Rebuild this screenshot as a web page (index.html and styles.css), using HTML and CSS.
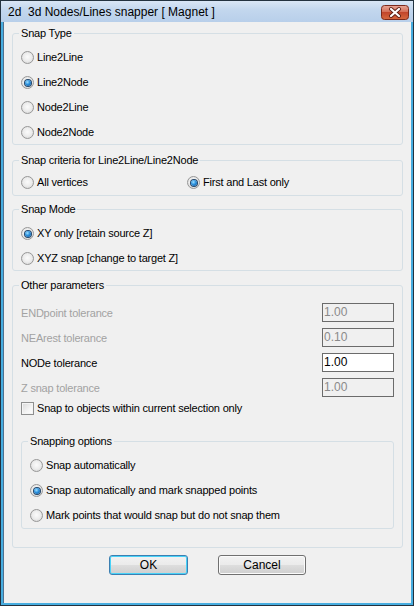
FILE: index.html
```html
<!DOCTYPE html>
<html>
<head>
<meta charset="utf-8">
<link rel="stylesheet" href="styles.css">
</head>
<body>
<div class="window">
  <div class="titlebar">
    <span class="title">2d  3d Nodes/Lines snapper [ Magnet ]</span>
    <span class="close">
      <svg width="28" height="15" viewBox="0 0 28 15">
        <defs>
          <linearGradient id="cg" x1="0" y1="0" x2="0" y2="1">
            <stop offset="0" stop-color="#e9a797"/>
            <stop offset="0.45" stop-color="#d46f58"/>
            <stop offset="0.5" stop-color="#c2462c"/>
            <stop offset="1" stop-color="#d7693f"/>
          </linearGradient>
        </defs>
        <rect x="0.5" y="0.5" width="27" height="14" rx="3" fill="url(#cg)" stroke="#7c2a1c"/>
        <path d="M10 4 L18 11 M18 4 L10 11" stroke="#5b1e14" stroke-width="4" stroke-linecap="round"/>
        <path d="M10 4 L18 11 M18 4 L10 11" stroke="#ffffff" stroke-width="2.2" stroke-linecap="round"/>
      </svg>
    </span>
  </div>
  <div class="frame">
    <div class="client">
      <fieldset class="group g1">
        <legend>Snap Type</legend>
        <div class="rows">
          <div class="opt"><span class="radio"></span>Line2Line</div>
          <div class="opt"><span class="radio on"></span>Line2Node</div>
          <div class="opt"><span class="radio"></span>Node2Line</div>
          <div class="opt"><span class="radio"></span>Node2Node</div>
        </div>
      </fieldset>

      <fieldset class="group g2">
        <legend>Snap criteria for Line2Line/Line2Node</legend>
        <div class="cols">
          <div class="opt"><span class="radio"></span>All vertices</div>
          <div class="opt"><span class="radio on"></span>First and Last only</div>
        </div>
      </fieldset>

      <fieldset class="group g3">
        <legend>Snap Mode</legend>
        <div class="rows">
          <div class="opt"><span class="radio on"></span>XY only [retain source Z]</div>
          <div class="opt"><span class="radio"></span>XYZ snap [change to target Z]</div>
        </div>
      </fieldset>

      <fieldset class="group g4">
        <legend>Other parameters</legend>
        <div class="params">
          <div class="param disabled"><span>ENDpoint tolerance</span><span class="field">1.00</span></div>
          <div class="param disabled"><span>NEArest tolerance</span><span class="field">0.10</span></div>
          <div class="param"><span>NODe tolerance</span><span class="field active">1.00</span></div>
          <div class="param disabled"><span>Z snap tolerance</span><span class="field">1.00</span></div>
        </div>
        <div class="opt check-row"><span class="check"></span>Snap to objects within current selection only</div>

        <fieldset class="group inner">
          <legend>Snapping options</legend>
          <div class="rows">
            <div class="opt"><span class="radio"></span>Snap automatically</div>
            <div class="opt"><span class="radio on"></span>Snap automatically and mark snapped points</div>
            <div class="opt"><span class="radio"></span>Mark points that would snap but do not snap them</div>
          </div>
        </fieldset>
      </fieldset>

      <div class="buttons">
        <button class="btn default">OK</button>
        <button class="btn cancel">Cancel</button>
      </div>
    </div>
  </div>
</div>
</body>
</html>
```
FILE: styles.css
```css
html, body {
  margin: 0;
  padding: 0;
  background: #f0f0f0;
}
body {
  font-family: "Liberation Sans", Arial, sans-serif;
  font-size: 11px;
  color: #000;
}
.window {
  width: 414px;
  height: 606px;
  box-sizing: border-box;
  border: 1px solid #23323f;
  display: flex;
  flex-direction: column;
  background: #47ade0;
}
.titlebar {
  height: 21px;
  flex: none;
  display: flex;
  align-items: center;
  justify-content: space-between;
  background: linear-gradient(#d9e6f5, #c3d7ee 40%, #b8cfea);
  padding: 0 4px 0 7px;
}
.title {
  white-space: pre;
  font-size: 12px;
  color: #000;
  padding-top: 1px;
}
.close {
  display: flex;
  margin-top: 1px;
}
.frame {
  flex: 1;
  display: flex;
  padding: 0 2px 2px 2px;
}
.client {
  flex: 1;
  background: #f0f0f0;
  border-left: 1px solid #4f7190;
  padding: 0 8px;
  display: flex;
  flex-direction: column;
  letter-spacing: -0.2px;
}
.group {
  margin: 0;
  border: 1px solid #d5dfe5;
  border-radius: 3px;
  padding: 0 8px;
  min-width: 0;
}
.group legend {
  padding: 0 2px;
  margin-left: -2px;
  line-height: 13px;
  height: 13px;
}
.g1 { margin-top: 5px; padding-top: 10px; padding-bottom: 4px; }
.g2 { margin-top: 9px; padding-top: 8px; padding-bottom: 5px; }
.g3 { margin-top: 7px; padding-top: 10px; padding-bottom: 4px; }
.g4 { margin-top: 8px; padding-top: 11px; padding-bottom: 18px; }
.inner { margin-top: 20px; padding-top: 10px; padding-bottom: 5px; }

.rows {
  display: flex;
  flex-direction: column;
  gap: 10px;
}
.cols {
  display: grid;
  grid-template-columns: 166px 1fr;
}
.opt {
  display: flex;
  align-items: center;
  height: 15px;
  line-height: 15px;
  white-space: nowrap;
}
.radio {
  width: 13px;
  height: 13px;
  box-sizing: border-box;
  border-radius: 50%;
  border: 1px solid #979797;
  background: radial-gradient(circle at 50% 45%, #fbfbfb 0%, #ececec 50%, #cfcfcf 100%);
  margin-right: 3px;
  flex: none;
  display: inline-flex;
  align-items: center;
  justify-content: center;
}
.radio.on::after {
  content: "";
  width: 6px;
  height: 6px;
  border-radius: 50%;
  background: radial-gradient(circle at 40% 35%, #9fe0ff 0%, #2a8fdc 45%, #0a4f92 100%);
  box-shadow: 0 0 0 1px #23466a;
}
.check {
  width: 13px;
  height: 13px;
  box-sizing: border-box;
  border: 1px solid #8e8f8f;
  background: linear-gradient(135deg, #d8d8d8, #f4f4f4 60%, #ffffff);
  box-shadow: inset 0 0 0 1px #f4f4f4;
  margin-right: 3px;
  flex: none;
}
.params {
  display: flex;
  flex-direction: column;
  gap: 6px;
}
.param {
  display: flex;
  align-items: center;
  justify-content: space-between;
  height: 19px;
}
.param.disabled { color: #a2a2a2; }
.field {
  width: 72px;
  height: 19px;
  box-sizing: border-box;
  border: 1px solid #6b6b6b;
  background: #f0f0f0;
  color: #8a8a8a;
  padding-left: 1px;
  line-height: 17px;
  font-size: 12px;
  letter-spacing: 0;
}
.field.active {
  background: #ffffff;
  color: #000;
}
.check-row { margin-top: 5px; height: 13px; }

.buttons {
  display: flex;
  justify-content: center;
  gap: 30px;
  margin-top: 7px;
}
.btn {
  height: 20px;
  box-sizing: border-box;
  border: 1px solid #707070;
  border-radius: 3px;
  background: linear-gradient(#f2f2f2 0%, #ebebeb 48%, #dddddd 52%, #cfcfcf 100%);
  font-family: "Liberation Sans", Arial, sans-serif;
  font-size: 12px;
  color: #000;
  padding: 0;
  box-shadow: inset 0 0 0 1px #fbfbfb;
}
.btn.default {
  width: 79px;
  border-color: #3c7fb1;
  box-shadow: inset 0 0 0 1px #48d2f8;
}
.btn.cancel {
  width: 88px;
}
```
